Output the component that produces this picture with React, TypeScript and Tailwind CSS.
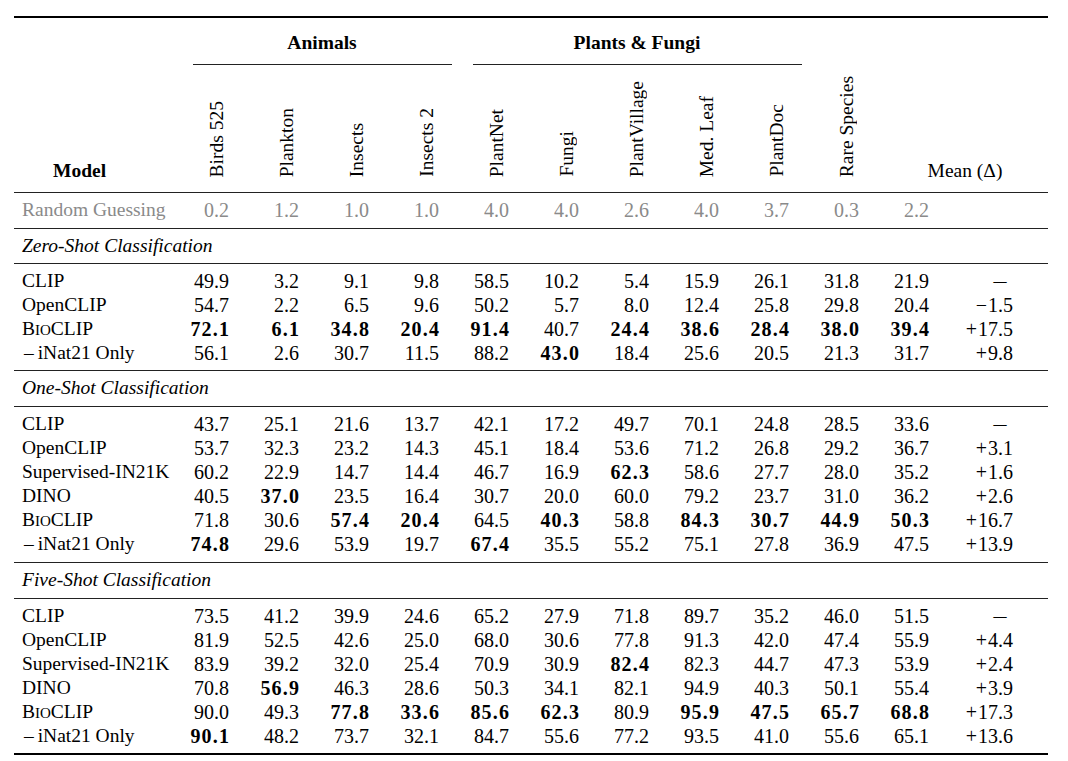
import React from "react";

const GRID = "grid grid-cols-[168px_repeat(11,70px)_96px]";

type Row = { name: React.ReactNode; vals: string[]; delta?: string; gray?: boolean };

const Bio = () => (
  <span>
    B<span className="text-[15px]">IO</span>CLIP
  </span>
);
const INat = () => <span className="pl-[2px]">–&#8201;iNat21 Only</span>;

const p = (s: string) => s.split(" ");

const zero: Row[] = [
  { name: "CLIP", vals: p("49.9 3.2 9.1 9.8 58.5 10.2 5.4 15.9 26.1 31.8 21.9"), delta: "–" },
  { name: "OpenCLIP", vals: p("54.7 2.2 6.5 9.6 50.2 5.7 8.0 12.4 25.8 29.8 20.4"), delta: "−1.5" },
  { name: <Bio />, vals: p("*72.1 *6.1 *34.8 *20.4 *91.4 40.7 *24.4 *38.6 *28.4 *38.0 *39.4"), delta: "+17.5" },
  { name: <INat />, vals: p("56.1 2.6 30.7 11.5 88.2 *43.0 18.4 25.6 20.5 21.3 31.7"), delta: "+9.8" },
];

const one: Row[] = [
  { name: "CLIP", vals: p("43.7 25.1 21.6 13.7 42.1 17.2 49.7 70.1 24.8 28.5 33.6"), delta: "–" },
  { name: "OpenCLIP", vals: p("53.7 32.3 23.2 14.3 45.1 18.4 53.6 71.2 26.8 29.2 36.7"), delta: "+3.1" },
  { name: "Supervised-IN21K", vals: p("60.2 22.9 14.7 14.4 46.7 16.9 *62.3 58.6 27.7 28.0 35.2"), delta: "+1.6" },
  { name: "DINO", vals: p("40.5 *37.0 23.5 16.4 30.7 20.0 60.0 79.2 23.7 31.0 36.2"), delta: "+2.6" },
  { name: <Bio />, vals: p("71.8 30.6 *57.4 *20.4 64.5 *40.3 58.8 *84.3 *30.7 *44.9 *50.3"), delta: "+16.7" },
  { name: <INat />, vals: p("*74.8 29.6 53.9 19.7 *67.4 35.5 55.2 75.1 27.8 36.9 47.5"), delta: "+13.9" },
];

const five: Row[] = [
  { name: "CLIP", vals: p("73.5 41.2 39.9 24.6 65.2 27.9 71.8 89.7 35.2 46.0 51.5"), delta: "–" },
  { name: "OpenCLIP", vals: p("81.9 52.5 42.6 25.0 68.0 30.6 77.8 91.3 42.0 47.4 55.9"), delta: "+4.4" },
  { name: "Supervised-IN21K", vals: p("83.9 39.2 32.0 25.4 70.9 30.9 *82.4 82.3 44.7 47.3 53.9"), delta: "+2.4" },
  { name: "DINO", vals: p("70.8 *56.9 46.3 28.6 50.3 34.1 82.1 94.9 40.3 50.1 55.4"), delta: "+3.9" },
  { name: <Bio />, vals: p("90.0 49.3 *77.8 *33.6 *85.6 *62.3 80.9 *95.9 *47.5 *65.7 *68.8"), delta: "+17.3" },
  { name: <INat />, vals: p("*90.1 48.2 73.7 32.1 84.7 55.6 77.2 93.5 41.0 55.6 65.1"), delta: "+13.6" },
];

const random: Row = {
  name: "Random Guessing",
  vals: p("0.2 1.2 1.0 1.0 4.0 4.0 2.6 4.0 3.7 0.3 2.2"),
  gray: true,
};

const labels = [
  "Birds 525",
  "Plankton",
  "Insects",
  "Insects 2",
  "PlantNet",
  "Fungi",
  "PlantVillage",
  "Med. Leaf",
  "PlantDoc",
  "Rare Species",
];

function Num({ v }: { v: string }) {
  if (v.startsWith("*")) {
    return (
      <span className="inline-block font-bold tracking-[1.2px] mr-[-1.2px]">{v.slice(1)}</span>
    );
  }
  return <span>{v}</span>;
}

function Delta({ d }: { d?: string }) {
  if (!d) return <div />;
  if (d === "–") {
    return (
      <div className="text-right pr-[43px] text-[20px]">
        <span className="inline-block scale-x-[1.3]">–</span>
      </div>
    );
  }
  const sign = d[0];
  return (
    <div className="text-right pr-[35px] text-[20px]">
      <span className="pr-[1px]">{sign}</span>
      {d.slice(1)}
    </div>
  );
}

function DataRow({ row }: { row: Row }) {
  return (
    <div className={`${GRID} h-[24px] leading-[24px] ${row.gray ? "text-[#8a8a8a]" : "text-black"}`}>
      <div className="pl-[8px] text-[19.5px] whitespace-nowrap">{row.name}</div>
      {row.vals.map((v, i) => (
        <div key={i} className="text-right pr-[23px] text-[20px]">
          <Num v={v} />
        </div>
      ))}
      <Delta d={row.delta} />
    </div>
  );
}

const Rule = () => <div className="h-px bg-[#222]" />;

function SectionLabel({ text, pb }: { text: string; pb: string }) {
  return (
    <div className={`pt-[5px] ${pb}`}>
      <div className="h-[24px] leading-[24px] pl-[8px] italic text-[19.5px]">{text}</div>
    </div>
  );
}

function Block({ rows, pb }: { rows: Row[]; pb: string }) {
  return (
    <div className={`pt-[5px] ${pb}`}>
      {rows.map((r, i) => (
        <DataRow key={i} row={r} />
      ))}
    </div>
  );
}

export default function App() {
  return (
    <div className="w-[1068px] h-[761px] bg-white pt-[16px] pl-[14px] [font-family:'Liberation_Serif',serif] text-black">
      <div className="w-[1034px]">
        <div className="h-[2px] bg-black" />
        {/* Header */}
        <div className="h-[174px] flex flex-col">
          <div className={`${GRID} h-[47px]`}>
            <div />
            <div className="col-span-4 flex flex-col">
              <div className="flex-1 flex items-center justify-center pt-[4px] font-bold text-[19.5px]">
                Animals
              </div>
              <div className="mx-[10.5px] h-px bg-[#222]" />
            </div>
            <div className="col-span-5 flex flex-col">
              <div className="flex-1 flex items-center justify-center pt-[4px] font-bold text-[19.5px]">
                Plants &amp; Fungi
              </div>
              <div className="mx-[10.5px] h-px bg-[#222]" />
            </div>
          </div>
          <div className={`${GRID} flex-1`}>
            <div className="flex items-end pl-[39px] pb-[9px] font-bold text-[19.5px] leading-[24px]">
              Model
            </div>
            {labels.map((l) => (
              <div key={l} className="flex items-end justify-center pb-[15px]">
                <span className="[writing-mode:vertical-rl] rotate-180 leading-[24px] text-[19.5px] whitespace-nowrap">
                  {l}
                </span>
              </div>
            ))}
            <div className="col-span-2 flex items-end justify-center pb-[9px] text-[19.5px] leading-[24px]">
              Mean (Δ)
            </div>
          </div>
        </div>
        <Rule />
        <div className="pt-[5px] pb-[6px]">
          <DataRow row={random} />
        </div>
        <Rule />
        <SectionLabel text="Zero-Shot Classification" pb="pb-[5px]" />
        <Rule />
        <Block rows={zero} pb="pb-[5px]" />
        <Rule />
        <SectionLabel text="One-Shot Classification" pb="pb-[6px]" />
        <Rule />
        <Block rows={one} pb="pb-[6px]" />
        <Rule />
        <SectionLabel text="Five-Shot Classification" pb="pb-[6px]" />
        <Rule />
        <Block rows={five} pb="pb-[5px]" />
        <div className="h-[2px] bg-black" />
      </div>
    </div>
  );
}
